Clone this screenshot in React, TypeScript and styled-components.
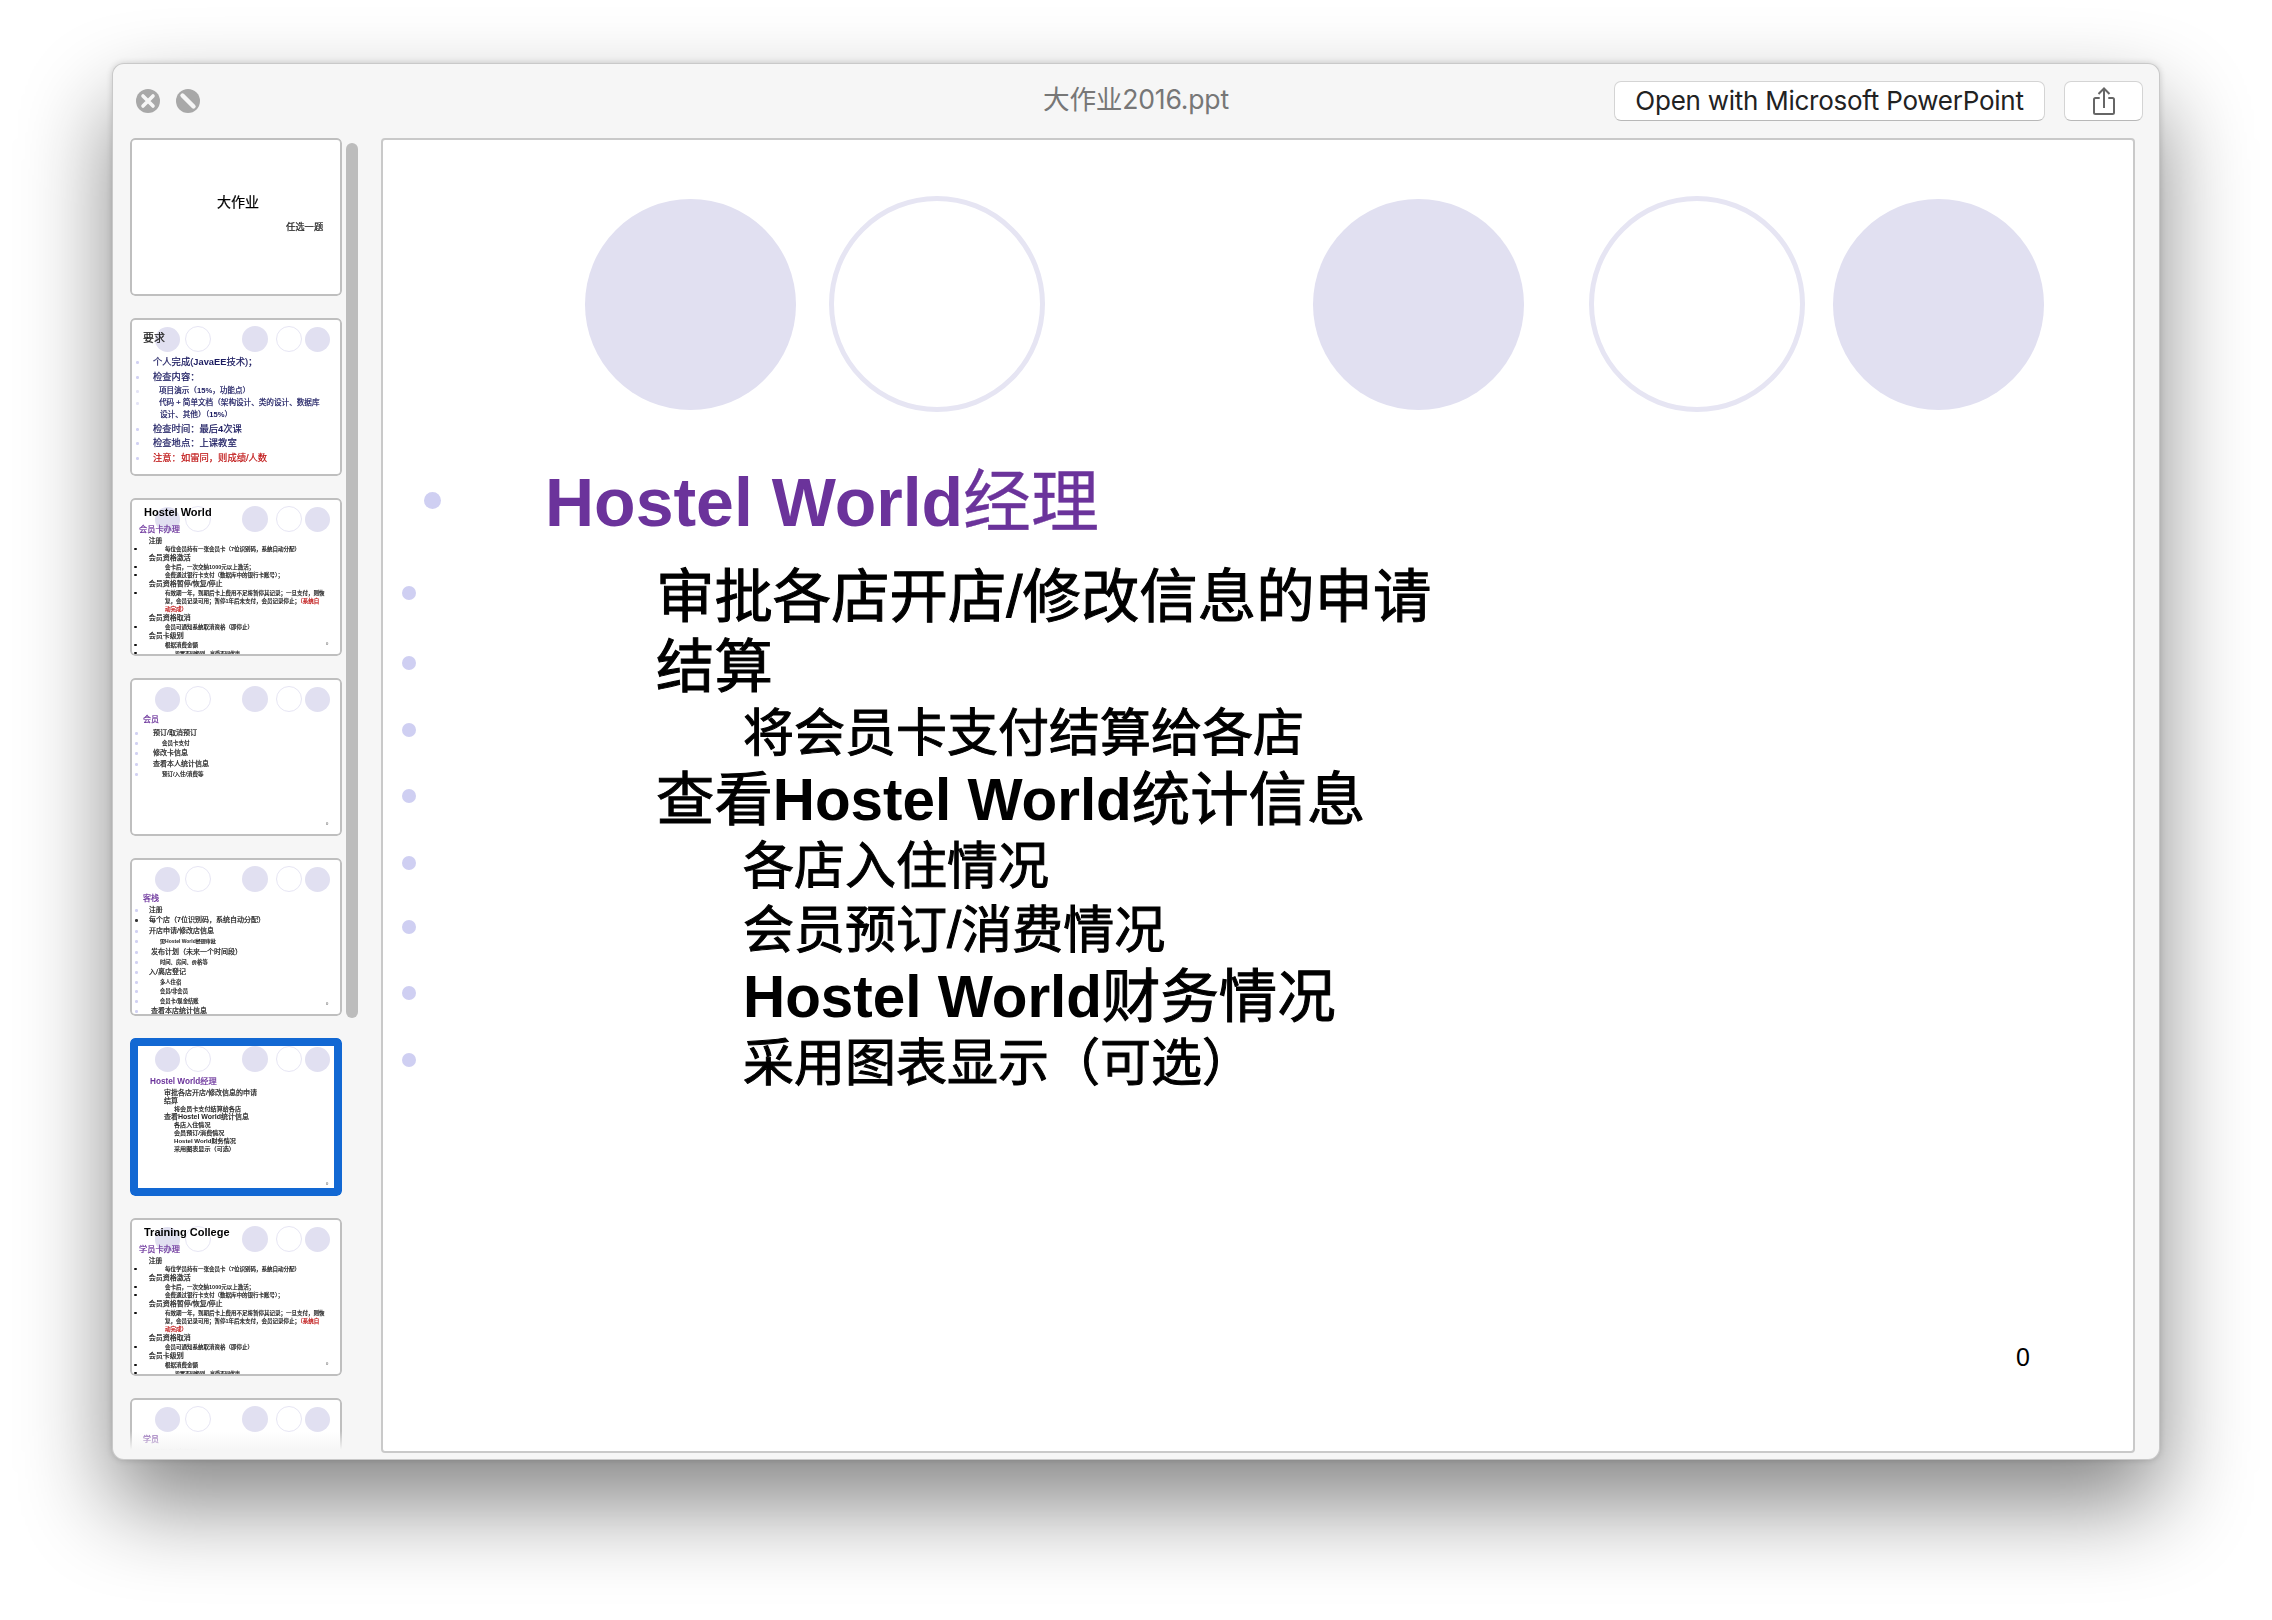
import React from "react";
import styled, { createGlobalStyle } from "styled-components";

const FONT = `"Liberation Sans", "Noto Sans CJK SC", sans-serif`;

const Global = createGlobalStyle`
  html, body { margin: 0; padding: 0; background: #fff; }
  * { box-sizing: border-box; }
`;

const Page = styled.div`
  width: 2272px;
  height: 1620px;
  padding: 63px 112px 160px;
  overflow: hidden;
  background: #fff;
`;

const Window = styled.div`
  width: 2048px;
  height: 1397px;
  display: flex;
  flex-direction: column;
  background: #f6f6f6;
  border-radius: 12px;
  box-shadow: 0 44px 90px rgba(0, 0, 0, 0.48), 0 0 6px rgba(0, 0, 0, 0.16), inset 0 0 0 1px rgba(0, 0, 0, 0.18);
`;

const TitleBar = styled.header`
  height: 75px;
  flex: none;
  display: grid;
  grid-template-columns: 1fr auto 1fr;
  align-items: center;
  padding: 0 17px;
`;

const Lights = styled.div`
  display: flex;
  gap: 16px;
  margin-left: 7px;
`;

const FileName = styled.div`
  margin-bottom: 6px;
  font-family: "Inter", "Noto Sans CJK SC", sans-serif;
  font-size: 26.6px;
  color: #777;
  letter-spacing: -0.2px;
`;

const Actions = styled.div`
  display: flex;
  justify-content: flex-end;
  gap: 19px;
`;

const ToolButton = styled.button<{ $w: number }>`
  width: ${(p) => p.$w}px;
  height: 40px;
  padding: 0;
  display: flex;
  align-items: center;
  justify-content: center;
  background: #fff;
  border: 1px solid #d4d4d4;
  border-bottom-color: #b8b8b8;
  border-radius: 7px;
  font-family: "Inter", sans-serif;
  font-size: 26px;
  color: #222;
  letter-spacing: -0.25px;
`;

const Body = styled.div`
  flex: 1;
  min-height: 0;
  display: flex;
  padding: 0 25px 7px 18px;
`;

const Sidebar = styled.aside`
  position: relative;
  width: 212px;
  flex: none;
  display: flex;
  flex-direction: column;
  gap: 22px;
  overflow: hidden;
  &::after {
    content: "";
    position: absolute;
    left: 0;
    right: 0;
    bottom: 0;
    height: 22px;
    background: linear-gradient(rgba(246, 246, 246, 0), #f6f6f6 85%);
  }
`;

const ScrollTrack = styled.div`
  width: 12px;
  margin: 5px 23px 0 4px;
  flex: none;
`;

const ScrollThumb = styled.div`
  height: 875px;
  border-radius: 6px;
  background: #bcbcbc;
`;

const Thumb = styled.div<{ $selected?: boolean }>`
  position: relative;
  flex: none;
  width: 212px;
  height: 158px;
  background: #fff;
  border-radius: 5px;
  overflow: hidden;
  &::after {
    content: "";
    position: absolute;
    inset: 0;
    border-radius: 5px;
    border: ${(p) => (p.$selected ? "8px solid #1268d3" : "2px solid #bfbfbf")};
  }
`;

const ThumbContent = styled.div`
  display: flow-root;
  height: 100%;
  filter: blur(0.35px);
  font-family: ${FONT};
  -webkit-text-stroke: 0.22px currentColor;
`;

const CircleRow = styled.div<{ $left: number; $top: number; $height: number }>`
  position: absolute;
  left: ${(p) => p.$left}px;
  top: ${(p) => p.$top}px;
  height: ${(p) => p.$height}px;
  display: flex;
  align-items: center;
`;

const Circle = styled.div<{ $size: number; $gap: number; $hollow?: boolean; $line: number }>`
  width: ${(p) => p.$size}px;
  height: ${(p) => p.$size}px;
  margin-left: ${(p) => p.$gap}px;
  flex: none;
  border-radius: 50%;
  background: ${(p) => (p.$hollow ? "#fff" : "#e1e0f1")};
  border: ${(p) => (p.$hollow ? `${p.$line}px solid #e6e5f3` : "none")};
`;

const ThumbLines = styled.div`
  position: relative;
  display: flow-root;
`;

const ThumbRow = styled.div<{ $mt: number; $size: number; $color: string; $x: number }>`
  height: 8px;
  line-height: 8px;
  margin-top: ${(p) => p.$mt}px;
  padding-left: ${(p) => p.$x}px;
  font-size: ${(p) => p.$size}px;
  color: ${(p) => p.$color};
  white-space: nowrap;
  position: relative;
`;

const ThumbDot = styled.span<{ $x: number; $color: string }>`
  position: absolute;
  left: ${(p) => p.$x}px;
  top: 3px;
  width: 2.5px;
  height: 2.5px;
  border-radius: 50%;
  background: ${(p) => p.$color};
`;

const ThumbRed = styled.span`
  color: #c01818;
`;

const ThumbNumber = styled.span`
  position: absolute;
  left: 196px;
  top: 143px;
  font-size: 4px;
  color: #999;
`;

const Bold = styled.b`
  font-weight: 700;
  -webkit-text-stroke: 0;
`;

const Slide = styled.main`
  position: relative;
  flex: 1;
  min-width: 0;
  display: flex;
  flex-direction: column;
  padding-top: 323px;
  background: #fff;
  border: 2px solid #c9c9c9;
  border-radius: 4px;
  font-family: ${FONT};
  color: #000;
`;

const SlideRow = styled.div<{ $mt: number; $h: number }>`
  display: flex;
  align-items: center;
  height: ${(p) => p.$h}px;
  margin-top: ${(p) => p.$mt}px;
  white-space: nowrap;
`;

const BulletCell = styled.div<{ $w: number; $x: number }>`
  width: ${(p) => p.$w}px;
  padding-left: ${(p) => p.$x}px;
  flex: none;
  display: flex;
  align-items: center;
`;

const Bullet = styled.span<{ $size: number }>`
  width: ${(p) => p.$size}px;
  height: ${(p) => p.$size}px;
  margin-bottom: 5px;
  border-radius: 50%;
  background: #cfcff2;
`;

const SlideTitle = styled.h1`
  margin: 0 0 14px;
  font-size: 68px;
  font-weight: 400;
  color: #6b339b;
  -webkit-text-stroke: 0.3px #6b339b;
`;

const SlideText = styled.div<{ $size: number }>`
  margin-bottom: 7px;
  font-size: ${(p) => p.$size}px;
  -webkit-text-stroke: 1px #000;
`;

const PageNumber = styled.div`
  margin-top: auto;
  margin-bottom: 79px;
  margin-right: 103px;
  align-self: flex-end;
  font-size: 25px;
`;

const ShareIcon = () => (
  <svg width="26" height="28" viewBox="0 0 26 28" fill="none" stroke="#666" strokeWidth="2">
    <path d="M8.7 11H4.5A1.5 1.5 0 0 0 3 12.5v13A1.5 1.5 0 0 0 4.5 27h17a1.5 1.5 0 0 0 1.5-1.5v-13a1.5 1.5 0 0 0-1.5-1.5h-4.2" />
    <path d="M13 21V1.5M7.5 7 13 1.5 18.500 7" />
  </svg>
);

const CloseLight = () => (
  <svg width="24" height="24" viewBox="0 0 24 24">
    <circle cx="12" cy="12" r="12" fill="#a8a8a8" />
    <path d="M7 7l10 10M17 7L7 17" stroke="#f6f6f6" strokeWidth="3.6" strokeLinecap="round" />
  </svg>
);

const BlockedLight = () => (
  <svg width="24" height="24" viewBox="0 0 24 24">
    <circle cx="12" cy="12" r="12" fill="#a8a8a8" />
    <path d="M6.5 6.5l11 11" stroke="#f6f6f6" strokeWidth="4.4" strokeLinecap="round" />
  </svg>
);

const mixed = (text: string) =>
  text.split(/([A-Za-z0-9%]+(?: [A-Za-z0-9%]+)*)/).map((part, i) =>
    i % 2 === 1 ? <Bold key={i}>{part}</Bold> : <React.Fragment key={i}>{part}</React.Fragment>
  );

type Row = {
  c: number;
  x: number;
  s: number;
  t: string;
  col?: string;
  dot?: number;
  dotCol?: string;
  bold?: boolean;
  red?: string;
};

const PURPLE = "#6b339b";
const NAVY = "#1b1b60";
const INK = "#222";
const RED = "#c01818";
const LILAC = "#d2d2f3";
const BLACK = "#111";

const cardRows = (title: string, head: string, who: string): Row[] => [
  { c: 14, x: 14, s: 11, t: title, col: "#000", bold: true },
  { c: 32, x: 9, s: 8.2, t: head, col: PURPLE },
  { c: 42.7, x: 18.7, s: 6.8, t: "注册", col: INK },
  { c: 51, x: 35, s: 5.5, t: `每位${who}持有一张会员卡（7位识别码，系统自动分配）`, col: INK, dot: 4, dotCol: BLACK },
  { c: 60, x: 18.7, s: 7, t: "会员资格激活", col: INK },
  { c: 68.7, x: 35, s: 5.5, t: "会卡后，一次交纳1000元以上激活；", col: INK, dot: 4, dotCol: BLACK },
  { c: 77, x: 35, s: 5.5, t: "会费通过银行卡支付（数据库中的银行卡账号）；", col: INK, dot: 4, dotCol: BLACK },
  { c: 86, x: 18.7, s: 7, t: "会员资格暂停/恢复/停止", col: INK },
  { c: 94.7, x: 35, s: 5.5, t: "有效期一年，到期后卡上费用不足将暂停其记录；一旦支付，则恢", col: INK, dot: 4, dotCol: BLACK },
  { c: 103, x: 35, s: 5.5, t: "复，会员记录可用；暂停1年后未支付，会员记录停止；", red: "（系统自", col: INK },
  { c: 111, x: 35, s: 5.5, t: "动完成）", col: RED },
  { c: 120, x: 18.7, s: 7, t: "会员资格取消", col: INK },
  { c: 129, x: 35, s: 5.5, t: "会员可通知系统取消资格（即停止）", col: INK, dot: 4, dotCol: BLACK },
  { c: 138, x: 18.7, s: 7, t: "会员卡级别", col: INK },
  { c: 146.7, x: 35, s: 5.5, t: "根据消费金额", col: INK, dot: 4, dotCol: BLACK },
  { c: 155, x: 45, s: 5, t: "设置不同级别，享受不同优惠", col: INK, dot: 4, dotCol: BLACK },
];

const memberRows = (title: string): Row[] => [
  { c: 42, x: 13, s: 8, t: title, col: PURPLE },
  { c: 55, x: 23, s: 7, t: "预订/取消预订", col: INK, dot: 5, dotCol: LILAC },
  { c: 65, x: 32, s: 5.5, t: "会员卡支付", col: INK, dot: 5, dotCol: LILAC },
  { c: 75, x: 23, s: 7, t: "修改卡信息", col: INK, dot: 5, dotCol: LILAC },
  { c: 86, x: 23, s: 7, t: "查看本人统计信息", col: INK, dot: 5, dotCol: LILAC },
  { c: 96, x: 32, s: 5.5, t: "预订/入住/消费等", col: INK, dot: 5, dotCol: LILAC },
];

const slides: { rows: Row[]; circles?: boolean; selected?: boolean; number?: boolean }[] = [
  {
    circles: false,
    rows: [
      { c: 64, x: 87, s: 14, t: "大作业", col: "#000" },
      { c: 89, x: 156, s: 9.3, t: "任选一题", col: INK },
    ],
  },
  {
    rows: [
      { c: 20, x: 13, s: 11, t: "要求", col: "#222" },
      { c: 44, x: 23, s: 9.3, t: "个人完成(JavaEE技术)；", col: NAVY, dot: 6, dotCol: LILAC },
      { c: 59, x: 23, s: 9.3, t: "检查内容：", col: NAVY, dot: 6, dotCol: LILAC },
      { c: 73, x: 29, s: 7.6, t: "项目演示（15%，功能点）", col: NAVY, dot: 6, dotCol: "#e4e4f6" },
      { c: 85, x: 29, s: 7.6, t: "代码 + 简单文档（架构设计、类的设计、数据库", col: NAVY, dot: 6, dotCol: "#e4e4f6" },
      { c: 97, x: 30, s: 7.6, t: "设计、其他）（15%）", col: NAVY },
      { c: 111, x: 23, s: 9.3, t: "检查时间：最后4次课", col: NAVY, dot: 6, dotCol: LILAC },
      { c: 125, x: 23, s: 9.3, t: "检查地点：上课教室", col: NAVY, dot: 6, dotCol: LILAC },
      { c: 140, x: 23, s: 9.3, t: "注意：如雷同，则成绩/人数", col: RED, dot: 6, dotCol: LILAC },
    ],
  },
  { number: true, rows: cardRows("Hostel World", "会员卡办理", "会员") },
  { number: true, rows: memberRows("会员") },
  {
    number: true,
    rows: [
      { c: 41, x: 13, s: 8, t: "客栈", col: PURPLE },
      { c: 52, x: 19, s: 6.8, t: "注册", col: INK, dot: 5, dotCol: LILAC },
      { c: 62, x: 19, s: 7, t: "每个店（7位识别码，系统自动分配）", col: INK, dot: 5, dotCol: "#333" },
      { c: 73, x: 19, s: 7, t: "开店申请/修改店信息", col: INK, dot: 5, dotCol: LILAC },
      { c: 83, x: 30, s: 5, t: "需Hostel World经理审批", col: INK, dot: 5, dotCol: LILAC },
      { c: 94, x: 21, s: 7, t: "发布计划（未来一个时间段）", col: INK, dot: 5, dotCol: LILAC },
      { c: 104, x: 30, s: 5.3, t: "时间、房间、价格等", col: INK, dot: 5, dotCol: LILAC },
      { c: 114, x: 19, s: 7, t: "入/离店登记", col: INK, dot: 5, dotCol: LILAC },
      { c: 124, x: 30, s: 5.3, t: "多人住宿", col: INK, dot: 5, dotCol: LILAC },
      { c: 133, x: 30, s: 5.3, t: "会员/非会员", col: INK, dot: 5, dotCol: LILAC },
      { c: 143, x: 30, s: 5.3, t: "会员卡/现金结账", col: INK, dot: 5, dotCol: LILAC },
      { c: 153, x: 21, s: 7, t: "查看本店统计信息", col: INK, dot: 5, dotCol: LILAC },
    ],
  },
  {
    selected: true,
    number: true,
    rows: [
      { c: 44, x: 20, s: 8.2, t: "Hostel World经理", col: PURPLE },
      { c: 55, x: 34, s: 7, t: "审批各店开店/修改信息的申请", col: INK },
      { c: 63, x: 34, s: 7, t: "结算", col: INK },
      { c: 71, x: 44, s: 6.1, t: "将会员卡支付结算给各店", col: INK },
      { c: 79, x: 34, s: 7, t: "查看Hostel World统计信息", col: INK },
      { c: 87, x: 44, s: 6.1, t: "各店入住情况", col: INK },
      { c: 95, x: 44, s: 6.1, t: "会员预订/消费情况", col: INK },
      { c: 103, x: 44, s: 6.1, t: "Hostel World财务情况", col: INK },
      { c: 111, x: 44, s: 6.1, t: "采用图表显示（可选）", col: INK },
    ],
  },
  { number: true, rows: cardRows("Training College", "学员卡办理", "学员") },
  { rows: memberRows("学员").slice(0, 2) },
];

const thumbCircles = [
  { size: 25, gap: 0 },
  { size: 26, gap: 5, hollow: true },
  { size: 26, gap: 31 },
  { size: 26, gap: 8, hollow: true },
  { size: 25, gap: 3 },
];

const slideCircles = [
  { size: 211, gap: 0 },
  { size: 216, gap: 33, hollow: true },
  { size: 211, gap: 268 },
  { size: 216, gap: 65, hollow: true },
  { size: 211, gap: 28 },
];

const Circles = ({
  items,
  left,
  top,
  height,
  line,
}: {
  items: typeof thumbCircles;
  left: number;
  top: number;
  height: number;
  line: number;
}) => (
  <CircleRow $left={left} $top={top} $height={height}>
    {items.map((c, i) => (
      <Circle key={i} $size={c.size} $gap={c.gap} $hollow={(c as { hollow?: boolean }).hollow} $line={line} />
    ))}
  </CircleRow>
);

const ThumbSlide = ({ slide }: { slide: (typeof slides)[number] }) => {
  let prev = 0;
  return (
    <Thumb $selected={slide.selected}>
      <ThumbContent>
        {slide.circles !== false && <Circles items={thumbCircles} left={25} top={8} height={26} line={1} />}
        <ThumbLines>
          {slide.rows.map((r, i) => {
            const mt = r.c - 4 - prev;
            prev = r.c + 4;
            return (
              <ThumbRow key={i} $mt={mt} $size={r.s} $color={r.col ?? INK} $x={r.x}>
                {r.dot !== undefined && <ThumbDot $x={r.dot} $color={r.dotCol ?? LILAC} />}
                {r.bold ? <Bold>{r.t}</Bold> : mixed(r.t)}
                {r.red && <ThumbRed>{r.red}</ThumbRed>}
              </ThumbRow>
            );
          })}
        </ThumbLines>
        {slide.number && <ThumbNumber>0</ThumbNumber>}
      </ThumbContent>
    </Thumb>
  );
};

const bodyRows = [
  { t: "审批各店开店/修改信息的申请", size: 58.4, indent: 273, mt: 22 },
  { t: "结算", size: 58.4, indent: 273, mt: 10 },
  { t: "将会员卡支付结算给各店", size: 51, indent: 360, mt: 7 },
  { t: "查看Hostel World统计信息", size: 58.4, indent: 273, mt: 6 },
  { t: "各店入住情况", size: 51, indent: 360, mt: 7 },
  { t: "会员预订/消费情况", size: 51, indent: 360, mt: 4 },
  { t: "Hostel World财务情况", size: 58.4, indent: 360, mt: 6 },
  { t: "采用图表显示（可选）", size: 51, indent: 360, mt: 7 },
];

export default function App() {
  return (
    <>
      <Global />
      <Page>
        <Window>
          <TitleBar>
            <Lights>
              <CloseLight />
              <BlockedLight />
            </Lights>
            <FileName>大作业2016.ppt</FileName>
            <Actions>
              <ToolButton $w={431}>Open with Microsoft PowerPoint</ToolButton>
              <ToolButton $w={79} aria-label="Share">
                <ShareIcon />
              </ToolButton>
            </Actions>
          </TitleBar>
          <Body>
            <Sidebar>
              {slides.map((s, i) => (
                <ThumbSlide key={i} slide={s} />
              ))}
            </Sidebar>
            <ScrollTrack>
              <ScrollThumb />
            </ScrollTrack>
            <Slide>
              <Circles items={slideCircles} left={202} top={56} height={216} line={5} />
              <SlideRow $mt={0} $h={80}>
                <BulletCell $w={162} $x={41}>
                  <Bullet $size={17} />
                </BulletCell>
                <SlideTitle>{mixed("Hostel World经理")}</SlideTitle>
              </SlideRow>
              {bodyRows.map((r, i) => (
                <SlideRow key={i} $mt={r.mt} $h={60}>
                  <BulletCell $w={r.indent} $x={19}>
                    <Bullet $size={14} />
                  </BulletCell>
                  <SlideText $size={r.size}>{mixed(r.t)}</SlideText>
                </SlideRow>
              ))}
              <PageNumber>0</PageNumber>
            </Slide>
          </Body>
        </Window>
      </Page>
    </>
  );
}
